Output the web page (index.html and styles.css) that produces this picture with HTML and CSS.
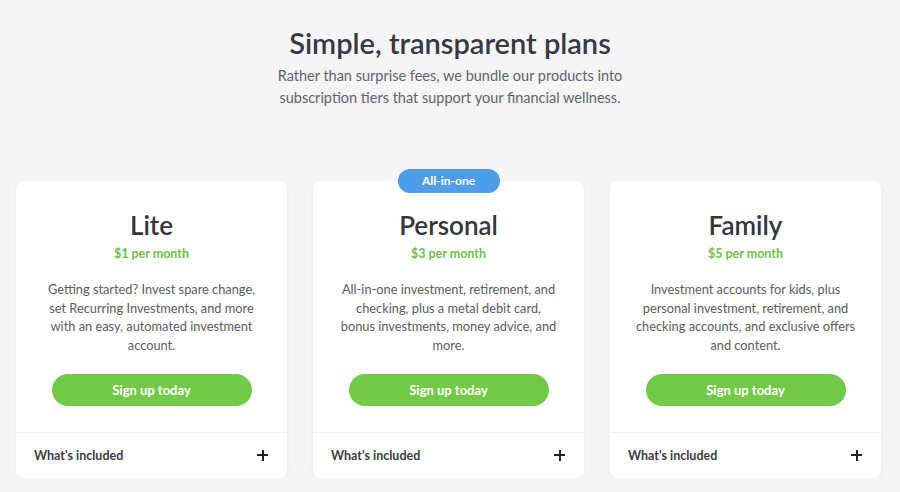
FILE: index.html
```html
<!DOCTYPE html>
<html lang="en">
<head>
    <meta charset="UTF-8">
    <meta name="viewport" content="width=device-width, initial-scale=1.0">
    <title>Simple, transparent plans</title>
    <link rel="stylesheet" href="styles.css">
</head>
<body>
    <header class="intro">
        <h1>Simple, transparent plans</h1>
        <p>Rather than surprise fees, we bundle our products into<br>subscription tiers that support your financial wellness.</p>
    </header>
    <main class="plans">
        <section class="plan">
            <div class="plan-body">
                <h2>Lite</h2>
                <p class="price">$1 per month</p>
                <p class="desc">Getting started? Invest spare change, set Recurring Investments, and more with an easy, automated investment account.</p>
                <a class="signup" href="#">Sign up today</a>
            </div>
            <div class="plan-foot">
                <span>What's included</span>
                <span class="plus"></span>
            </div>
        </section>
        <section class="plan">
            <span class="badge">All-in-one</span>
            <div class="plan-body">
                <h2>Personal</h2>
                <p class="price">$3 per month</p>
                <p class="desc">All-in-one investment, retirement, and checking, plus a metal debit card, bonus investments, money advice, and more.</p>
                <a class="signup" href="#">Sign up today</a>
            </div>
            <div class="plan-foot">
                <span>What's included</span>
                <span class="plus"></span>
            </div>
        </section>
        <section class="plan">
            <div class="plan-body">
                <h2>Family</h2>
                <p class="price">$5 per month</p>
                <p class="desc">Investment accounts for kids, plus personal investment, retirement, and checking accounts, and exclusive offers and content.</p>
                <a class="signup" href="#">Sign up today</a>
            </div>
            <div class="plan-foot">
                <span>What's included</span>
                <span class="plus"></span>
            </div>
        </section>
    </main>
</body>
</html>
```

FILE: styles.css
```css
body {
    font-family: Lato, "Open Sans", sans-serif;
    margin: 0;
    padding: 0;
    background-color: #f5f5f5;
    color: #3a3b45;
}
.intro {
    text-align: center;
    padding-top: 25px;
}
.intro h1 {
    margin: 0;
    font-size: 29px;
    line-height: 36px;
    font-weight: 600;
    color: #363842;
}
.intro p {
    margin: 4px 0 0;
    font-size: 14.5px;
    line-height: 22px;
    color: #616269;
}
.plans {
    display: grid;
    grid-template-columns: repeat(3, 271px);
    gap: 26px;
    padding: 0 16px;
    margin-top: 72px;
}
.plan {
    position: relative;
    display: flex;
    flex-direction: column;
    background: #fff;
    border-radius: 8px;
    box-shadow: 0 1px 4px rgba(0, 0, 0, 0.05);
}
.badge {
    position: absolute;
    top: -12px;
    left: 50%;
    transform: translateX(-50%);
    width: 102px;
    height: 24px;
    line-height: 24px;
    border-radius: 12px;
    background: #4d9de9;
    color: #fff;
    font-size: 12px;
    font-weight: 700;
    text-align: center;
}
.plan-body {
    flex: 1;
    padding: 28px 20px 26px;
    text-align: center;
    border-bottom: 1px solid #f0f0f0;
}
.plan-body h2 {
    margin: 0;
    font-size: 26px;
    line-height: 32px;
    font-weight: 600;
    color: #33353d;
}
.price {
    margin: 5px 0 0;
    font-size: 12.5px;
    line-height: 16px;
    font-weight: 700;
    color: #6cc24a;
}
.desc {
    max-width: 220px;
    margin: 18px auto 0;
    font-size: 12.8px;
    line-height: 18.7px;
    color: #5a5b61;
}
.signup {
    display: block;
    width: 200px;
    height: 32px;
    line-height: 32px;
    margin: 19px auto 0;
    border-radius: 16px;
    background: #72c847;
    color: #fff;
    font-size: 13px;
    font-weight: 700;
    text-decoration: none;
}
.plan-foot {
    display: flex;
    justify-content: space-between;
    align-items: center;
    height: 45px;
    padding: 0 19px 0 18px;
    font-size: 12.5px;
    font-weight: 700;
    color: #3a3b45;
}
.plus {
    position: relative;
    width: 11px;
    height: 11px;
}
.plus::before,
.plus::after {
    content: "";
    position: absolute;
    background: #222;
}
.plus::before {
    left: 0;
    top: 4.5px;
    width: 11px;
    height: 2px;
}
.plus::after {
    left: 4.5px;
    top: 0;
    width: 2px;
    height: 11px;
}
```
